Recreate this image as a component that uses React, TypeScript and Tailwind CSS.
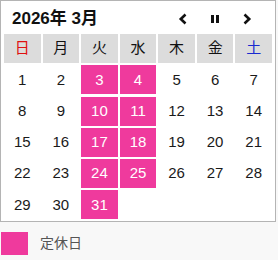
import React from 'react';

const WEEK = ['日', '月', '火', '水', '木', '金', '土'];
const CLOSED = [3, 4, 10, 11, 17, 18, 24, 25, 31];

const font = { fontFamily: '"Liberation Sans", "Noto Sans CJK JP", sans-serif' };

export default function App() {
  // March 2026 starts on Sunday
  const days: (number | null)[] = [];
  for (let d = 1; d <= 31; d++) days.push(d);
  while (days.length % 7 !== 0) days.push(null);

  return (
    <div className="w-[278px] h-[260px] bg-[#f8f8f8]" style={font}>
      <div className="w-[276px] bg-white border border-[#b4b4b4] pt-[7px] pb-[2px] px-[3px]">
        <div className="flex items-center h-[21px] pl-[8px] pr-[18px]">
          <div className="text-[17px] font-bold text-[#111] leading-none">2026年 3月</div>
          <div className="ml-auto flex items-center gap-[18px]">
            <svg width="14" height="14" viewBox="0 0 14 14" className="text-[#111]">
              <path d="M9.5 2.5 L4.8 7 L9.5 11.5" fill="none" stroke="currentColor" strokeWidth="2.6" />
            </svg>
            <svg width="14" height="14" viewBox="0 0 14 14">
              <rect x="3" y="3" width="3" height="8" fill="#111" />
              <rect x="8" y="3" width="3" height="8" fill="#111" />
            </svg>
            <svg width="14" height="14" viewBox="0 0 14 14" className="text-[#111]">
              <path d="M4.5 2.5 L9.2 7 L4.5 11.5" fill="none" stroke="currentColor" strokeWidth="2.6" />
            </svg>
          </div>
        </div>
        <div className="grid grid-cols-7 gap-x-[2px] gap-y-[2.3px] mt-[5px]">
          {WEEK.map((w, i) => (
            <div
              key={w}
              className={
                'h-[29px] flex items-center justify-center bg-[#dcdcdc] text-[15px] ' +
                (i === 0 ? 'text-[#e01010]' : i === 6 ? 'text-[#1a2ad0]' : 'text-[#111]')
              }
            >
              {w}
            </div>
          ))}
          {days.map((d, i) => (
            <div
              key={i}
              className={
                'h-[29px] flex items-center justify-center text-[15px] ' +
                (d && CLOSED.includes(d) ? 'bg-[#ef3a9d] text-white' : 'text-[#1a1a1a]')
              }
            >
              {d ?? ''}
            </div>
          ))}
        </div>
      </div>
      <div className="flex items-center mt-[10px] pl-[1px]">
        <div className="w-[27px] h-[23px] bg-[#ef3a9d]" />
        <div className="ml-[12px] text-[14px] text-[#555]">定休日</div>
      </div>
    </div>
  );
}
